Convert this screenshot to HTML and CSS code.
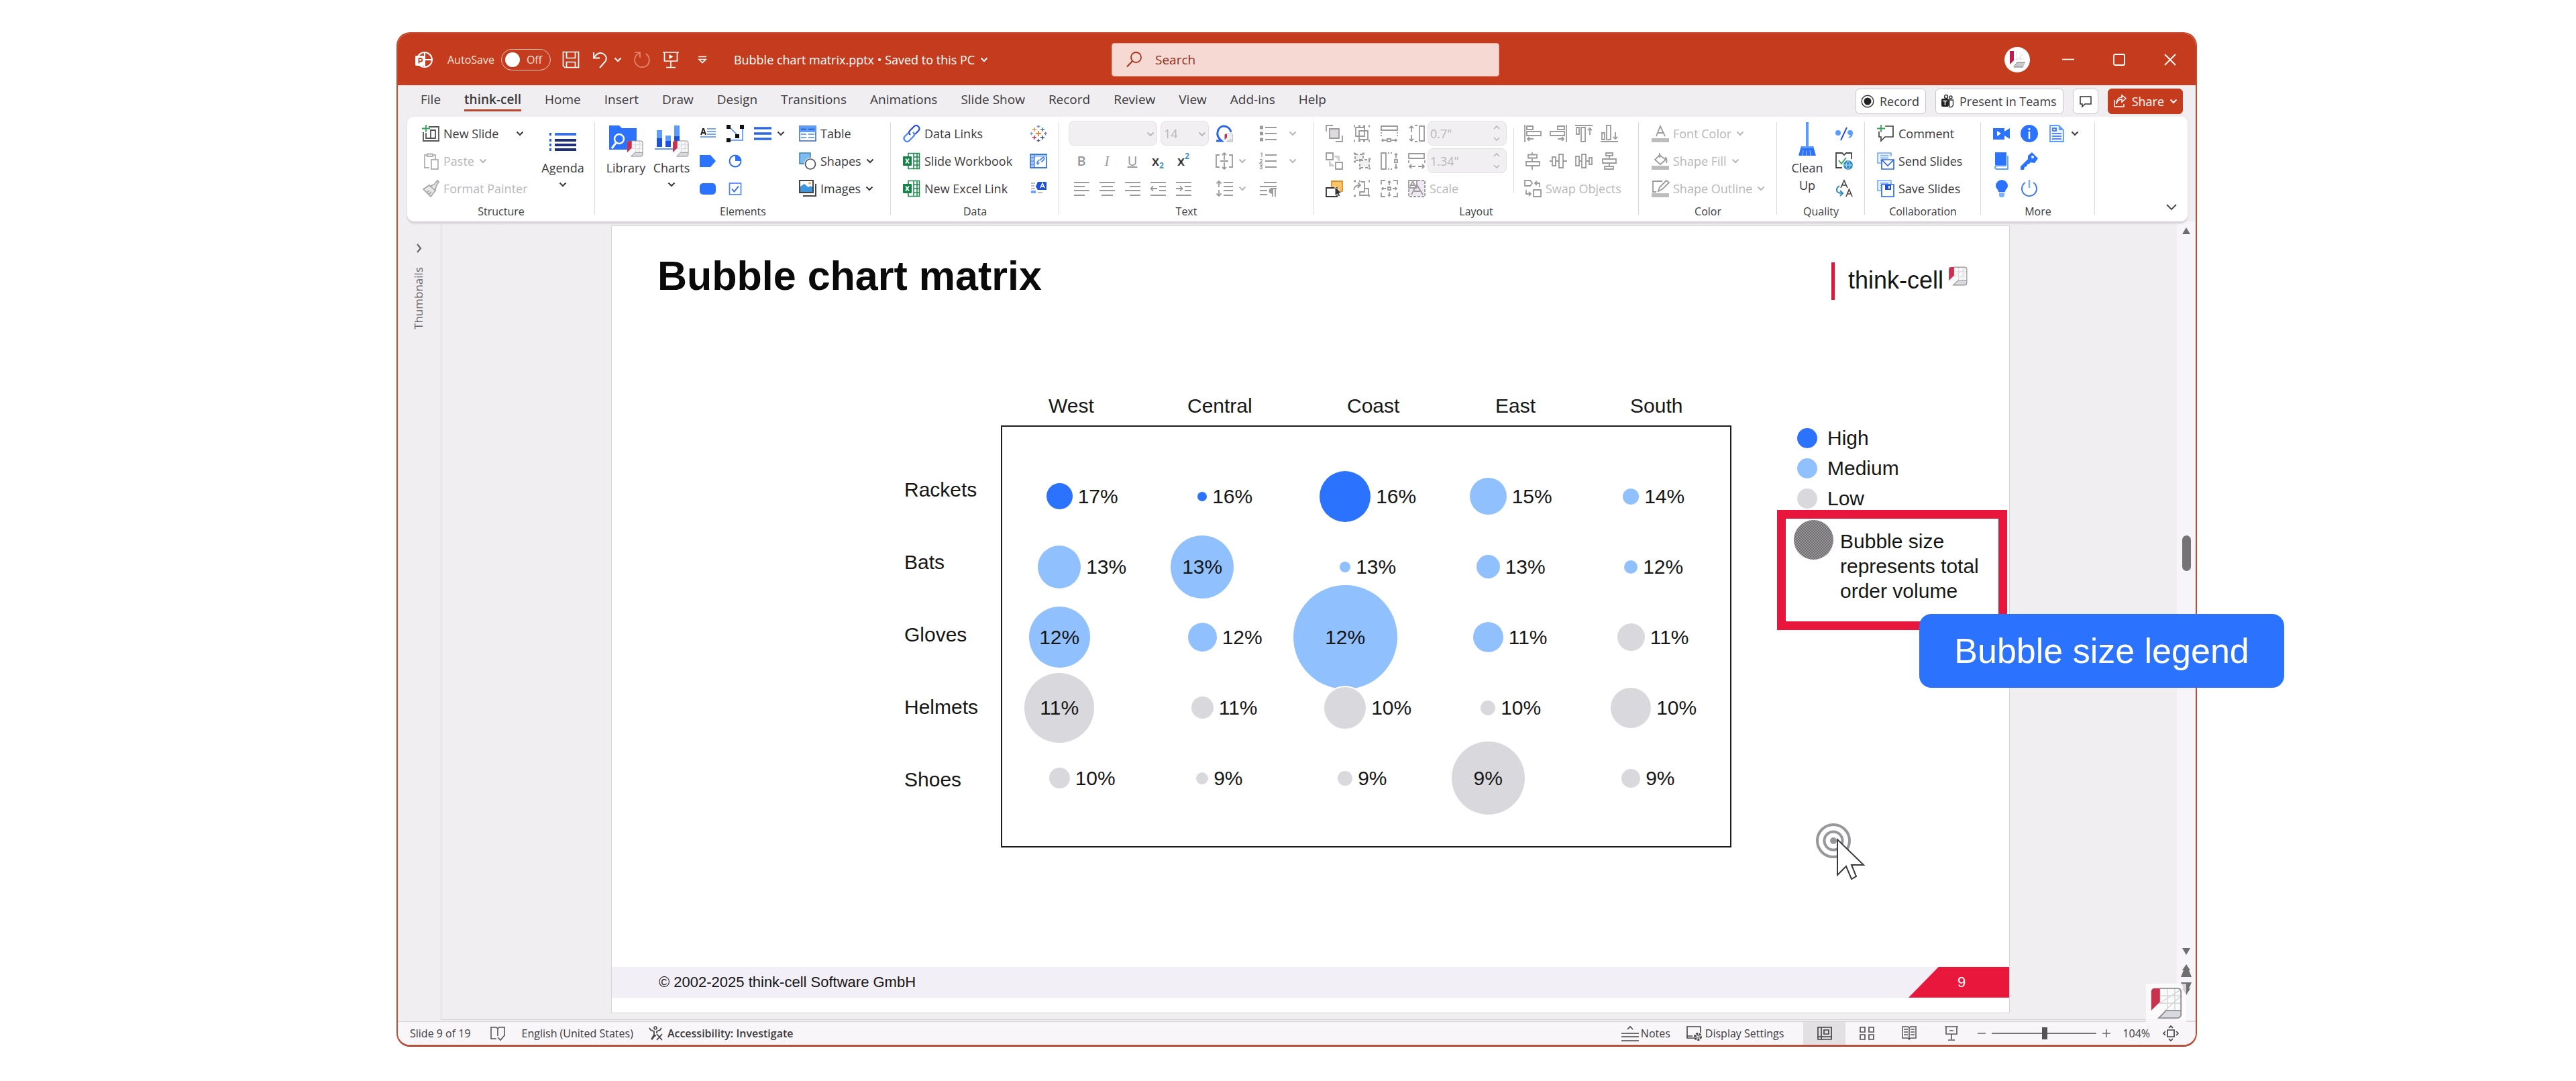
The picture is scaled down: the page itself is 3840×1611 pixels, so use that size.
FILE: index.html
```html
<!DOCTYPE html>
<html lang="en">
<head>
<meta charset="utf-8">
<title>Bubble chart matrix.pptx</title>
<link rel="stylesheet" href="styles.css">
</head>
<body>
<svg class="sprite" aria-hidden="true">
  <symbol id="chev" viewBox="0 0 12 12"><path d="M1.500 3.500L6 8l4.500-4.500" fill="none" stroke="currentColor" stroke-width="2"/></symbol>
  <symbol id="tc" viewBox="0 0 52 52"><path d="M8 2H50V44Q50 50 44 50H12L2 38V8Q2 2 8 2Z" fill="#fbfafb"/><path d="M16 2v24M28 2v36M40 2v36M16 14h34M14 26h36M16 26L50 4M24 38L50 14" stroke="#d5d3d6" fill="none" stroke-width="1.5"/><path d="M8 2h8v22L2 38V8q0-6 6-6z" fill="#c9324f"/><path d="M26 38h24v6q0 6-6 6H14z" fill="#d9dae0" stroke="#8e8c90" stroke-width="2"/><path d="M50 38V8q0-6-6-6H16" fill="none" stroke="#8e8c90" stroke-width="2"/></symbol>
  <symbol id="xl" viewBox="0 0 26 26"><path d="M8 1.500h16.500v23H8zM16 1.500v23M21 1.500v23M16 7h8.500M16 13h8.500M16 19h8.500" fill="#fff" stroke="#1f8a4d" stroke-width="1.600"/><rect x="0" y="6" width="13" height="14" rx="1" fill="#16834a"/><path d="M4 9.500l5 7M9 9.500l-5 7" stroke="#fff" stroke-width="1.800"/></symbol>
  <symbol id="slides" viewBox="0 0 26 26"><path d="M6 16H1V1h20v5M5 5h12M5 8.500h12M5 12h3" fill="#eaf2ff" stroke="#6ba4ff" stroke-width="1.600"/></symbol>
</svg>

<main class="window">
  <header class="titlebar">
    <div class="quick">
      <svg class="i26" viewBox="0 0 26 26"><circle cx="14" cy="13" r="11" fill="none" stroke="#fff" stroke-width="2"/><path d="M14 2v11h11M14 13v11" fill="none" stroke="#fff" stroke-width="2"/><rect x="0" y="7" width="14" height="15" rx="2" fill="#fff"/><path d="M5.500 18.500V11h2.500a2.300 2.300 0 0 1 0 4.700H5.500" fill="none" stroke="#c43c1d" stroke-width="1.800"/></svg>
      <label class="autosave">AutoSave <span class="track"><input type="checkbox" role="switch">Off</span></label>
      <button class="qa" aria-label="Save"><svg class="i26" viewBox="0 0 26 26"><path d="M1.500 1.500h23v23H4l-2.500-2.500zM6.500 1.500v9h13v-9M6.500 24.500v-8h13v8" fill="none" stroke="#fff" stroke-width="1.700"/></svg></button>
      <button class="qa split" aria-label="Undo"><svg class="i26" viewBox="0 0 26 26"><path d="M4 2v8.500h9M4.500 10C8 4 13 1.500 18 4c6 3.500 6 9 2 13l-7 8" fill="none" stroke="#fff" stroke-width="1.900"/></svg><svg class="i12"><use href="#chev"/></svg></button>
      <button class="qa" aria-label="Redo"><svg class="i26" viewBox="0 0 26 26"><path d="M2 2h8v8M9.500 3C2 6 0 14 4.500 20c5 6 14 5.500 18-1 3-6 1-12-4-15" fill="none" stroke="#e4886f" stroke-width="1.700"/></svg></button>
      <button class="qa" aria-label="Start slide show"><svg class="i26" viewBox="0 0 26 26"><path d="M1 2h24M3.500 2v13h19V2M13 15v9.500M6 24.500h14" fill="none" stroke="#fff" stroke-width="1.700"/><path d="M10.500 5v7l6-3.500z" fill="#fff"/></svg></button>
      <button class="qa more" aria-label="Customize toolbar"><svg class="i12" viewBox="0 0 12 12"><path d="M0 1.500h12M1 5.500l5 5 5-5z" fill="none" stroke="#fff" stroke-width="1.700"/></svg></button>
      <button class="doc">Bubble chart matrix.pptx • Saved to this PC <svg class="i12"><use href="#chev"/></svg></button>
    </div>
    <label class="search"><svg class="i26" viewBox="0 0 26 26"><circle cx="15.500" cy="9.500" r="7.500" fill="none" stroke="#a8341a" stroke-width="1.800"/><path d="M10 15L2 23.500" stroke="#a8341a" stroke-width="2"/></svg><input type="search" placeholder="Search" aria-label="Search"></label>
    <div class="caption">
      <span class="avatar"><svg class="i26" viewBox="0 0 26 26"><path d="M2 0h6v14l-6 6z" fill="#c2194f"/><path d="M13 17h12l-3 7H8z" fill="#c9c9ce"/><path d="M8 23.500l5-6.500h12M8 24h14" stroke="#77757a" fill="none"/><path d="M12 1v12M18 3v11M9 12h15M12 13L22 5" stroke="#dddbe0" fill="none"/></svg></span>
      <button aria-label="Minimize"><svg class="i18" viewBox="0 0 18 18"><path d="M0 8.500h18" stroke="#fff" stroke-width="1.700"/></svg></button>
      <button aria-label="Maximize"><svg class="i18" viewBox="0 0 18 18"><rect x="1" y="1" width="16" height="16" rx="2" fill="none" stroke="#fff" stroke-width="1.800"/></svg></button>
      <button aria-label="Close"><svg class="i18" viewBox="0 0 18 18"><path d="M1 1l16 16M17 1L1 17" stroke="#fff" stroke-width="1.800"/></svg></button>
    </div>
  </header>

  <nav class="tabs">
    <a href="#file">File</a><a href="#think-cell" class="on">think-cell</a><a href="#home">Home</a><a href="#insert">Insert</a><a href="#draw">Draw</a><a href="#design">Design</a><a href="#transitions">Transitions</a><a href="#animations">Animations</a><a href="#slideshow">Slide Show</a><a href="#record">Record</a><a href="#review">Review</a><a href="#view">View</a><a href="#addins">Add-ins</a><a href="#help">Help</a>
    <div class="actions">
      <button class="pill"><svg class="i20" viewBox="0 0 20 20"><circle cx="10" cy="10" r="8.800" fill="none" stroke="#333" stroke-width="1.400"/><circle cx="10" cy="10" r="5.500" fill="#222"/></svg>Record</button>
      <button class="pill"><svg class="i20" viewBox="0 0 20 20"><circle cx="8" cy="3" r="2.500" fill="none" stroke="#333" stroke-width="1.400"/><circle cx="15" cy="4" r="2" fill="none" stroke="#333" stroke-width="1.400"/><path d="M13 8h5.500v7c0 3-3 4-6 3.500M13 6v12" fill="none" stroke="#333" stroke-width="1.400"/><rect x="1" y="6" width="11" height="12" rx="2" fill="#222"/><path d="M3.500 9.500h6M6.500 9.500v6" stroke="#fff" stroke-width="1.500"/></svg>Present in Teams</button>
      <button class="pill note" aria-label="Comments"><svg class="i20" viewBox="0 0 20 20"><path d="M2 3h16v11h-9l-4 4v-4H2z" fill="none" stroke="#333" stroke-width="1.500"/></svg></button>
      <button class="pill share"><svg class="i20" viewBox="0 0 20 20"><path d="M2 8v10h14v-4M5 14c1-5 4-7 8-7v4l6-5.500L13 1v3C8 4 5 8 5 14z" fill="none" stroke="#fff" stroke-width="1.500"/></svg>Share<svg class="i12"><use href="#chev"/></svg></button>
    </div>
  </nav>

  <section class="ribbon">
    <div class="group g-structure">
      <div class="tools">
        <div class="col">
          <button class="tool wide"><svg class="i26" viewBox="0 0 26 26"><path d="M10 3h15v21H2V11M6 12v8h14V8h-8M13 8v12" fill="none" stroke="#555" stroke-width="1.800"/><path d="M6 0v11M0 5.500h12" stroke="#3ba35a" stroke-width="1.800"/></svg>New Slide<svg class="i12"><use href="#chev"/></svg></button>
          <button class="tool" disabled><svg class="i26" viewBox="0 0 26 26"><path d="M11 23H4V4h4M16 4h4v6M8 2.500h8V6H8zM14 11h10v14H14z" fill="none" stroke="#b3b1b4" stroke-width="1.800"/></svg>Paste<svg class="i12"><use href="#chev"/></svg></button>
          <button class="tool" disabled><svg class="i26" viewBox="0 0 26 26"><path d="M2 14l9-6 9 8-7 9zM7 19l4-3M10 22l4-4M13 9l5-2 5-6 2 2-4 7-1 5" fill="#e9e7ea" stroke="#a9a7aa" stroke-width="1.800"/></svg>Format Painter</button>
        </div>
        <button class="big"><svg class="bigicon" viewBox="0 0 50 50"><path d="M5 15h3M5 24h3M5 31h3M5 38h3" stroke="#2b5fd8" stroke-width="4"/><path d="M13 15h32" stroke="#3a6fe8" stroke-width="4"/><path d="M13 24h32M13 31h32M13 38h32" stroke="#1f2f7c" stroke-width="4"/></svg>Agenda<svg class="i12"><use href="#chev"/></svg></button>
      </div>
      <h2>Structure</h2>
    </div>

    <div class="group g-elements">
      <div class="tools">
        <button class="big"><svg class="bigicon" viewBox="0 0 50 50"><path d="M0 2h15l4 4h22v32H0z" fill="#2b72ff"/><circle cx="15" cy="22" r="7" fill="none" stroke="#fff" stroke-width="2.500"/><path d="M11 27l-7 9" stroke="#fff" stroke-width="3"/><svg x="26" y="24" width="25" height="25"><use href="#tc"/></svg></svg>Library</button>
        <button class="big"><svg class="bigicon" viewBox="0 0 50 50"><path d="M3 9h8v12H3zM16 17h8v10h-8zM29 2h8v16h-8z" fill="#5c9bff"/><path d="M3 21h8v13H3zM16 25h8v9h-8zM29 18h8v16h-8z" fill="#1d4fe0"/><path d="M0 37h28" stroke="#5c9bff" stroke-width="2"/><svg x="26" y="24" width="25" height="25"><use href="#tc"/></svg></svg>Charts<svg class="i12"><use href="#chev"/></svg></button>
        <div class="icons three">
          <button aria-label="Text box"><svg class="i26" viewBox="0 0 26 26"><path d="M3 15l3-9h1l3 9M4 12h5" fill="none" stroke="#222" stroke-width="2"/><path d="M12 6h13M12 10h13M12 14h13M2 18h23" stroke="#4a86f5" stroke-width="1.600"/></svg></button>
          <button aria-label="Connector"><svg class="i26" viewBox="0 0 26 26"><path d="M4 3l14 14M24 3v20H3" fill="none" stroke="#4a86f5" stroke-width="1.500"/><path d="M0 0h6v6H0zM20 0h6v6h-6zM13 14h6v6h-6zM0 20h6v6H0z" fill="#111"/></svg></button>
          <button class="split" aria-label="Lines"><svg class="i26" viewBox="0 0 26 26"><path d="M0 5h26M0 13h26M0 21h26" stroke="#2b65e8" stroke-width="3.500"/></svg><svg class="i12"><use href="#chev"/></svg></button>
          <button aria-label="Pentagon"><svg class="i26" viewBox="0 0 26 26"><path d="M1 4h16l8 9-8 9H1z" fill="#2b72ff"/></svg></button>
          <button aria-label="Harvey ball"><svg class="i26" viewBox="0 0 26 26"><circle cx="13" cy="13" r="8.500" fill="#fff" stroke="#2b65e8" stroke-width="1.800"/><path d="M13 4.500a8.500 8.500 0 0 1 8.500 8.500H13z" fill="#2b72ff"/></svg></button>
          <i></i>
          <button aria-label="Rounded rectangle"><svg class="i26" viewBox="0 0 26 26"><rect x="1" y="5" width="24" height="17" rx="5" fill="#2b72ff"/></svg></button>
          <button aria-label="Checkbox"><svg class="i26" viewBox="0 0 26 26"><rect x="4.500" y="5" width="17" height="17" fill="#fff" stroke="#4a86f5" stroke-width="1.700"/><path d="M8 13.500l3.500 4 6.500-8" fill="none" stroke="#2b65e8" stroke-width="1.800"/></svg></button>
        </div>
        <div class="col">
          <button class="tool"><svg class="i26" viewBox="0 0 26 26"><rect x="1" y="2" width="24" height="22" fill="#fff" stroke="#3a6fd8" stroke-width="1.600"/><path d="M1 2h24v9H1z" fill="#5c9bff"/><path d="M3 6.500h8M14 6.500h9" stroke="#1d4fb0" stroke-width="1.600"/><path d="M3 14h8M14 14h9M3 19h8M14 19h9" stroke="#4a86f5" stroke-width="1.600"/></svg>Table</button>
          <button class="tool"><svg class="i26" viewBox="0 0 26 26"><path d="M1 1h16v16H1z" fill="#7dbcf0" stroke="#3f7fb5" stroke-width="1.500"/><circle cx="17" cy="17" r="9" fill="#fff"/><circle cx="17" cy="17.500" r="7.500" fill="#fff" stroke="#555" stroke-width="1.700"/></svg>Shapes<svg class="i12"><use href="#chev"/></svg></button>
          <button class="tool"><svg class="i26" viewBox="0 0 26 26"><path d="M25 6v18H6" fill="none" stroke="#444" stroke-width="2"/><path d="M1 1h20v18H1z" fill="#fff" stroke="#444" stroke-width="2"/><path d="M2 10l6-4 6 5 3-2 3 2v7H2z" fill="#3f95e0"/><circle cx="16" cy="5" r="1.800" fill="#f0a050"/></svg>Images<svg class="i12"><use href="#chev"/></svg></button>
        </div>
      </div>
      <h2>Elements</h2>
    </div>

    <div class="group g-data">
      <div class="tools">
        <div class="col">
          <button class="tool"><svg class="i26" viewBox="0 0 26 26" fill="none" stroke-width="2.300"><path d="M11 15l-1-1c-1.500-2-1-4 .5-5.500l6-6c2-2 4.500-2 6.500 0s2 4.500 0 6.500l-5 5" stroke="#2b50d8"/><path d="M15 11l1 1c1.500 2 1 4-.5 5.500l-6 6c-2 2-4.500 2-6.500 0s-2-4.500 0-6.500l5-5" stroke="#4a86f5"/></svg>Data Links</button>
          <button class="tool"><svg class="i26"><use href="#xl"/></svg>Slide Workbook</button>
          <button class="tool"><svg class="i26"><use href="#xl"/></svg>New Excel Link</button>
        </div>
        <div class="icons one">
          <button aria-label="Tableau"><svg class="i26" viewBox="0 0 26 26" stroke-width="1.400"><path d="M13 9v8M9 13h8" stroke="#e8833a" stroke-width="1.800"/><path d="M13 0v5M10.500 2.500h5" stroke="#7f9fc0"/><path d="M13 21v5M10.500 23.500h5" stroke="#5b5f98"/><path d="M7 4v6M4 7h6" stroke="#e8935a"/><path d="M19 4v6M16 7h6" stroke="#4f7596"/><path d="M7 16v6M4 19h6" stroke="#b5304f"/><path d="M19 16v6M16 19h6" stroke="#2f4d86"/><path d="M2.500 10.500v5M0 13h5" stroke="#7f9fc0"/><path d="M23.500 10.500v5M21 13h5" stroke="#7b7fb0"/></svg></button>
          <button aria-label="Table link"><svg class="i26" viewBox="0 0 26 26"><path d="M1 3h24v20H1z" fill="#fff" stroke="#3a78d8" stroke-width="1.800"/><path d="M2 4h5v18H2zM2 4h23v3H2z" fill="#a9c8ff"/><path d="M7 3v20M2 8h5M2 13h5M2 18h5" stroke="#3a78d8" stroke-width="1.200"/><path d="M14 15l-1 2c-1 1-3 0-2-2l3-4M15 12l4-4c2-1 3.500 1 2.500 2.500l-4 4" fill="none" stroke="#4a86f5" stroke-width="1.800"/></svg></button>
          <button aria-label="Tagged text"><svg class="i26" viewBox="0 0 26 26"><path d="M2 5h6M2 9h5M2 13h6M12 19h7" stroke="#aaa8ac" stroke-width="1.600"/><path d="M2 16h7v4H2z" fill="#6ba4ff"/><path d="M12 3h13v12H12l-3-5z" fill="#1d4fe0"/><path d="M16 12l3-7 3 7M17 10h4" fill="none" stroke="#fff" stroke-width="1.500"/></svg></button>
        </div>
      </div>
      <h2>Data</h2>
    </div>

    <div class="group g-text">
      <div class="tools">
        <div class="col font">
          <div class="row">
            <span class="combo c1"><select disabled aria-label="Font"><option></option></select><svg class="i12"><use href="#chev"/></svg></span>
            <span class="combo c2"><select disabled aria-label="Font size"><option>14</option></select><svg class="i12"><use href="#chev"/></svg></span>
          </div>
          <div class="row five">
            <button class="dim"><b>B</b></button><button class="dim"><em>I</em></button><button class="dim"><u>U</u></button><button class="x"><b>x</b><sub>2</sub></button><button class="x"><b>x</b><sup>2</sup></button>
          </div>
          <div class="row five">
            <button aria-label="Align left"><svg class="i26 g" viewBox="0 0 26 26"><path d="M2 4h23M2 10h16M2 16h23M2 23h16"/></svg></button>
            <button aria-label="Center"><svg class="i26 g" viewBox="0 0 26 26"><path d="M2 4h23M5 10h17M2 16h23M5 23h17"/></svg></button>
            <button aria-label="Align right"><svg class="i26 g" viewBox="0 0 26 26"><path d="M2 4h23M9 10h16M2 16h23M9 23h16"/></svg></button>
            <button aria-label="Decrease indent"><svg class="i26 g" viewBox="0 0 26 26"><path d="M2 4h23M15 10h10M15 16h10M2 23h23M12 13H3M6 9.500L2.500 13 6 16.500"/></svg></button>
            <button aria-label="Increase indent"><svg class="i26 g" viewBox="0 0 26 26"><path d="M2 4h23M15 10h10M15 16h10M2 23h23M2 13h9M8 9.500l3.500 3.500L8 16.500"/></svg></button>
          </div>
        </div>
        <div class="col mid">
          <button aria-label="Symbol"><svg class="i26" viewBox="0 0 26 26"><path d="M1 24h8c-5-4-7-8-6-13C4 5 8 2 12 2c6 0 10 4 11 9" fill="none" stroke="#2b65e8" stroke-width="3"/><svg x="13" y="13" width="13" height="13"><use href="#tc"/></svg></svg></button>
          <button class="split" disabled aria-label="Align text"><svg class="i26 g" viewBox="0 0 26 26"><path d="M6 4H1v18h5M20 4h5v18h-5M7 13h12M13 11V1M10 4l3-3 3 3M13 15v10M10 22l3 3 3-3"/></svg><svg class="i12"><use href="#chev"/></svg></button>
          <button class="split" disabled aria-label="Line spacing"><svg class="i26 g" viewBox="0 0 26 26"><path d="M12 4h14M12 10h14M12 16h14M12 23h14M5 2v9M1.500 5.500L5 2l3.500 3.500M5 15v9M1.500 20.500L5 24l3.500-3.500"/></svg><svg class="i12"><use href="#chev"/></svg></button>
        </div>
        <div class="col lists">
          <button class="split" disabled aria-label="Bullets"><svg class="i26 g" viewBox="0 0 26 26"><path d="M9 4h17M9 13h17M9 22h17"/><path d="M1 4h5M1 13h5M1 22h5" stroke-width="5"/></svg><svg class="i12"><use href="#chev"/></svg></button>
          <button class="split" disabled aria-label="Numbering"><svg class="i26 g" viewBox="0 0 26 26"><path d="M9 4h17M9 13h17M9 22h17"/><path d="M2 2l2-1v6M1 11c3-2 4 0 3 2l-3 3h4M1 19h3.500l-2 2.500c3 0 3 4-1.500 3" stroke-width="1.300"/></svg><svg class="i12"><use href="#chev"/></svg></button>
          <button disabled aria-label="Text direction"><svg class="i26 g" viewBox="0 0 26 26"><path d="M7 4h19M1 10h25M1 16h11M1 22h11M20 13v12M24 13v12M26 13h-7"/><path d="M20 13c-6 0-6 7 0 7z" fill="#a09ea1"/></svg></button>
        </div>
      </div>
      <h2>Text</h2>
    </div>

    <div class="group g-layout">
      <div class="tools">
        <div class="icons three">
          <button aria-label="Bring to front"><svg class="i26 g" viewBox="0 0 26 26"><path d="M1 10V1h10M25 16v9H15"/><path d="M6 6h14v14H6z" fill="#dddbde"/></svg></button>
          <button aria-label="Group"><svg class="i26 g" viewBox="0 0 26 26"><path d="M4 4h13v13H4zM9 9h13v13H9z"/><path d="M1 2h2M23 2h2M1 24h2M23 24h2M8 2h3M15 2h3M8 24h3M15 24h3" stroke-width="3"/></svg></button>
          <button aria-label="Same height"><svg class="i26 g" viewBox="0 0 26 26"><path d="M1 2h24v6H1z"/><path d="M1 11v8M25 11v8" stroke-dasharray="2 2"/><path d="M10 21h5v4h-5zM9 23H2M16 23h8M4 21l-2 2 2 2M22 21l2 2-2 2"/></svg></button>
          <button aria-label="Send to back"><svg class="i26 g" viewBox="0 0 26 26"><path d="M13 6h7v7M6 13v7h7" fill="#dddbde" stroke="#c9c7ca"/><path d="M1 1h10v10H1zM15 15h10v10H15z" fill="#fff"/></svg></button>
          <button aria-label="Ungroup"><svg class="i26 g" viewBox="0 0 26 26"><path d="M3 3h12v9H3zM10 11h14v12H10z" stroke-dasharray="4 3" fill="#f2f0f3"/><path d="M1 2h3M14 2h3M1 14h3M9 24h3M23 24h3M23 10h3" stroke-width="3"/></svg></button>
          <button aria-label="Same width"><svg class="i26 g" viewBox="0 0 26 26"><path d="M1 1h7v24H1z"/><path d="M11 1h8M11 25h8" stroke-dasharray="2 2"/><path d="M21 11h4v4h-4zM23 9V2M23 17v7M21 4l2-2 2 2M21 22l2 2 2-2"/></svg></button>
          <button aria-label="Select objects"><svg class="i26" viewBox="0 0 26 26"><path d="M9 2h16v15H9z" fill="#fdc46a" stroke="#e0912c" stroke-width="1.800"/><path d="M1 12h16v13H1z" fill="#fff" stroke="#333" stroke-width="1.800"/><path d="M14 10v14l3.500-3 2 4 2.500-1-2-4h4z" fill="#333" stroke="#fff"/></svg></button>
          <button aria-label="Regroup"><svg class="i26 g" viewBox="0 0 26 26"><path d="M1 15c1-5 4-7 9-7M7 4l4 4-4 4M12 3h5v10h6v10H10v-5h7V13"/><path d="M1 2h3M23 2h2M1 24h3M23 24h2M9 2h2" stroke-width="3"/></svg></button>
          <button aria-label="Fit"><svg class="i26 g" viewBox="0 0 26 26"><path d="M1 7V1h6M19 1h6v6M25 19v6h-6M7 25H1v-6M11 11h4v4h-4zM13 8V2M13 18v6M8 13H2M18 13h6M11 4l2-2 2 2M11 22l2 2 2-2M4 11l-2 2 2 2M22 11l2 2-2 2"/></svg></button>
        </div>
        <div class="col size">
          <div class="row"><svg class="i26 g" viewBox="0 0 26 26"><path d="M17 2h7v22h-7zM5 11V2M2 5l3-3 3 3M5 15v9M2 21l3 3 3-3M10 1h4M10 25h4"/></svg><span class="spin"><input disabled value='0.7"' aria-label="Height"><svg class="updown" viewBox="0 0 12 28"><path d="M2 8l4-4 4 4M2 21l4 4 4-4" fill="none" stroke="#b9b7ba" stroke-width="1.600"/></svg></span></div>
          <div class="row"><svg class="i26 g" viewBox="0 0 26 26"><path d="M1 2h23v7H1zM11 21H2M5 18l-3 3 3 3M15 21h9M21 18l3 3-3 3M1 12v4M25 12v4"/></svg><span class="spin"><input disabled value='1.34"' aria-label="Width"><svg class="updown" viewBox="0 0 12 28"><path d="M2 8l4-4 4 4M2 21l4 4 4-4" fill="none" stroke="#b9b7ba" stroke-width="1.600"/></svg></span></div>
          <button class="tool" disabled><svg class="i26 g" viewBox="0 0 26 26"><path d="M14 1h11v24H1V14" stroke-dasharray="4 2" fill="#f0e8f3"/><path d="M1 1h12v11H1z" fill="#fff"/><path d="M3 10l4-8 4 8M4 8h5M5 22l8-15 9 15M9 17h9"/></svg>Scale</button>
        </div>
        <span class="rule"></span>
        <div class="col">
          <div class="row four">
            <button aria-label="Align objects left"><svg class="i26 g" viewBox="0 0 26 26"><path d="M1 0v26M4 2h9v5H4zM4 10h21v6H4zM14 21H5M8 18l-3 3 3 3"/></svg></button>
            <button aria-label="Align objects right"><svg class="i26 g" viewBox="0 0 26 26"><path d="M25 0v26M12 2h10v5H12zM1 10h21v6H1zM12 21h9M18 18l3 3-3 3"/></svg></button>
            <button aria-label="Align objects top"><svg class="i26 g" viewBox="0 0 26 26"><path d="M0 1h26M2 4h4v10H2zM9 4h6v21H9zM22 15V5M19 8l3-3 3 3"/></svg></button>
            <button aria-label="Align objects bottom"><svg class="i26 g" viewBox="0 0 26 26"><path d="M0 25h26M2 12h4v10H2zM9 1h6v21H9zM22 11v10M19 18l3 3 3-3"/></svg></button>
          </div>
          <div class="row four">
            <button aria-label="Center horizontally"><svg class="i26 g" viewBox="0 0 26 26"><path d="M12 0v3M12 9v5M12 20v6M6 3.500h13v5H6zM3 14h20v6H3z"/></svg></button>
            <button aria-label="Center vertically"><svg class="i26 g" viewBox="0 0 26 26"><path d="M0 13h4M9 13h5M20 13h6M4 7h5v13H4zM14 3h6v20h-6z"/></svg></button>
            <button aria-label="Distribute horizontally"><svg class="i26 g" viewBox="0 0 26 26"><path d="M1 6h5v14H1zM10 3h6v20h-6zM21 8h4v10h-4zM6 13h4M16 13h5"/></svg></button>
            <button aria-label="Distribute vertically"><svg class="i26 g" viewBox="0 0 26 26"><path d="M8 1h10v4H8zM3 10h20v6H3zM6 21h13v4H6zM13 5v5M13 16v5"/></svg></button>
          </div>
          <button class="tool" disabled><svg class="i26 g" viewBox="0 0 26 26"><path d="M1 1h8l3 4-3 4H1zM14 15h11v10H14zM16 5h7v6M19 2l-3 3 3 3M10 21H3v-6M7 18l3 3-3 3"/></svg>Swap Objects</button>
        </div>
      </div>
      <h2>Layout</h2>
    </div>

    <div class="group g-color">
      <div class="tools">
        <div class="col">
          <button class="tool" disabled><svg class="i26 g" viewBox="0 0 26 26"><path d="M7 17l6-15 7 15M9 12h9"/><path d="M0 23h26" stroke="#bdbbbe" stroke-width="6"/></svg>Font Color<svg class="i12"><use href="#chev"/></svg></button>
          <button class="tool" disabled><svg class="i26 g" viewBox="0 0 26 26"><path d="M12 4l9 7-8 7-8-7zM12 8V1M20 8c3 0 3 4 2 8"/><path d="M0 23h26" stroke="#bdbbbe" stroke-width="6"/></svg>Shape Fill<svg class="i12"><use href="#chev"/></svg></button>
          <button class="tool" disabled><svg class="i26 g" viewBox="0 0 26 26"><path d="M16 2H2v16h5M10 17l2-6L22 1l4 3-10 10z"/><path d="M0 23h26" stroke="#bdbbbe" stroke-width="6"/></svg>Shape Outline<svg class="i12"><use href="#chev"/></svg></button>
        </div>
      </div>
      <h2>Color</h2>
    </div>

    <div class="group g-quality">
      <div class="tools">
        <button class="big"><svg class="bigicon" viewBox="0 0 50 50"><path d="M23 -3h4v38h-4z" fill="#5c9bff"/><path d="M16 33h18l4 14H12z" fill="#2b72ff"/><path d="M17 33h16v3H16z" fill="#5c9bff"/><path d="M18 48l1-9M24 48v-8M30 48l-1-9" stroke="#a9c8ff"/></svg><span>Clean<br>Up</span></button>
        <div class="icons one">
          <button aria-label="Decimal style"><svg class="i26" viewBox="0 0 26 26"><circle cx="4" cy="12" r="4" fill="#5c9bff"/><path d="M17 4L8 23" stroke="#2b50d8" stroke-width="2"/><path d="M22 8a4 4 0 0 1 4 4c0 4-2 7-6 8l-.500-1.500c2-1 3-2 3-3.500a3.600 3.600 0 1 1-.5-7z" fill="#5c9bff"/></svg></button>
          <button aria-label="Proofing language"><svg class="i26" viewBox="0 0 26 26"><path d="M24 10V1h-8l-3 3-3-3H1v22h9" fill="none" stroke="#444" stroke-width="1.800"/><path d="M5 12l4 5 7-9" fill="none" stroke="#3ba35a" stroke-width="1.900"/><circle cx="19" cy="19" r="7" fill="#2a8ac6"/><path d="M12.500 19h13M19 12.500c-4 4-4 9 0 13M19 12.500c4 4 4 9 0 13" stroke="#d4ebf8" fill="none"/></svg></button>
          <button aria-label="Replace fonts"><svg class="i26" viewBox="0 0 26 26"><path d="M8 12l5-11 5 11M10 8h6M16 25l4.500-11L25 25M18 21h6" fill="none" stroke="#444" stroke-width="1.600"/><path d="M6 9c-6 4-6 11 4 11M7 16l4 4-4 4" fill="none" stroke="#2a8ac6" stroke-width="2"/></svg></button>
        </div>
      </div>
      <h2>Quality</h2>
    </div>

    <div class="group g-collab">
      <div class="tools">
        <div class="col">
          <button class="tool"><svg class="i26" viewBox="0 0 26 26"><path d="M12 2h12v16H12l-6 6v-6H3v-8" fill="none" stroke="#444" stroke-width="1.700"/><path d="M6 0v11M0 5.500h12" stroke="#3ba35a" stroke-width="1.800"/></svg>Comment</button>
          <button class="tool"><svg class="i26" viewBox="0 0 26 26"><use href="#slides" width="26" height="26"/><path d="M7 11h18v14H7zM7 11l9 9 9-9" fill="#fff" stroke="#2b65e8" stroke-width="1.700"/></svg>Send Slides</button>
          <button class="tool"><svg class="i26" viewBox="0 0 26 26"><use href="#slides" width="26" height="26"/><path d="M7 7h18v18H7z" fill="#fff" stroke="#2b65e8" stroke-width="1.700"/><path d="M12 7h9v8h-9z" fill="#1d4fe0"/><path d="M17 9h2v4h-2z" fill="#fff"/></svg>Save Slides</button>
        </div>
      </div>
      <h2>Collaboration</h2>
    </div>

    <div class="group g-more">
      <div class="tools">
        <div class="icons three">
          <button aria-label="Videos"><svg class="i26" viewBox="0 0 26 26"><path d="M0 5h17v5l8-5v16l-8-5v6H0z" fill="#2b72ff"/><path d="M6 9v8l6-4z" fill="#fff"/></svg></button>
          <button aria-label="Info"><svg class="i26" viewBox="0 0 26 26"><circle cx="13" cy="13" r="13" fill="#2b72ff"/><path d="M13 10v11M13 5v3" stroke="#fff" stroke-width="2.500"/></svg></button>
          <button class="split" aria-label="Documents"><svg class="i26" viewBox="0 0 26 26"><path d="M3 1h13l7 7v17H3z" fill="#eaf2ff" stroke="#5c9bff" stroke-width="1.800"/><path d="M16 1l7 7h-7z" fill="#5c9bff"/><path d="M7 5h5v4H7zM6 13h14M6 17h14M6 21h14" fill="none" stroke="#2b65e8" stroke-width="1.700"/></svg><svg class="i12"><use href="#chev"/></svg></button>
          <button aria-label="Manual"><svg class="i26" viewBox="0 0 26 26"><path d="M3 0h17v19H3z" fill="#2b72ff"/><path d="M22 5v20H6c-4 0-4-5 0-5h14" fill="none" stroke="#5c9bff" stroke-width="1.800"/></svg></button>
          <button aria-label="License"><svg class="i26" viewBox="0 0 26 26"><path d="M17 0l9 9-5 7-6-1-2 2-3 1-1 3-3 1-1 4H0v-5L11 10V5z" fill="#2b72ff"/><circle cx="18" cy="7" r="2" fill="#fff"/></svg></button>
          <i></i>
          <button aria-label="Tips"><svg class="i26" viewBox="0 0 26 26"><path d="M13 0a9 9 0 0 1 9 9c0 4-4 5-4 9H8c0-4-4-5-4-9a9 9 0 0 1 9-9z" fill="#2b72ff"/><path d="M9 19h8v5l-2 2h-4l-2-2z" fill="#7fb0ff"/></svg></button>
          <button aria-label="Deactivate"><svg class="i26" viewBox="0 0 26 26"><path d="M7 4a11 11 0 1 0 12 0" fill="none" stroke="#3a78f0" stroke-width="2"/><path d="M13 0v12" stroke="#7fb0ff" stroke-width="2.500"/></svg></button>
        </div>
      </div>
      <h2>More</h2>
    </div>
    <button class="collapse" aria-label="Collapse ribbon"><svg class="i18" viewBox="0 0 18 18"><path d="M2 5l7 7 7-7" fill="none" stroke="#444" stroke-width="1.800"/></svg></button>
  </section>

  <section class="work">
    <aside class="thumbs"><button aria-label="Show thumbnails"><svg class="i12" viewBox="0 0 12 12"><path d="M4 0l5 6-5 6" fill="none" stroke="currentColor" stroke-width="2.200"/></svg></button><span>Thumbnails</span></aside>

    <div class="canvas">
      <article class="slide">
        <header class="head">
          <h1>Bubble chart matrix</h1>
          <div class="logo"><span>think-cell</span><svg class="mark"><use href="#tc"/></svg></div>
        </header>

        <div class="body">
          <div class="chart">
            <div class="cols"><span>West</span><span>Central</span><span>Coast</span><span>East</span><span>South</span></div>
            <div class="rows"><span>Rackets</span><span>Bats</span><span>Gloves</span><span>Helmets</span><span>Shoes</span></div>
            <div class="plot">
              <div class="pt hi" style="--d:39px"><i></i>17%</div>
              <div class="pt hi" style="--d:14px"><i></i>16%</div>
              <div class="pt hi" style="--d:76px"><i></i>16%</div>
              <div class="pt me" style="--d:55px"><i></i>15%</div>
              <div class="pt me" style="--d:24px"><i></i>14%</div>
              <div class="pt me" style="--d:64px"><i></i>13%</div>
              <div class="pt me" style="--d:94px"><i>13%</i></div>
              <div class="pt me" style="--d:16px"><i></i>13%</div>
              <div class="pt me" style="--d:35px"><i></i>13%</div>
              <div class="pt me" style="--d:20px"><i></i>12%</div>
              <div class="pt me" style="--d:91px"><i>12%</i></div>
              <div class="pt me" style="--d:43px"><i></i>12%</div>
              <div class="pt me" style="--d:155px"><i>12%</i></div>
              <div class="pt me" style="--d:45px"><i></i>11%</div>
              <div class="pt lo" style="--d:41px"><i></i>11%</div>
              <div class="pt lo" style="--d:104px"><i>11%</i></div>
              <div class="pt lo" style="--d:33px"><i></i>11%</div>
              <div class="pt lo" style="--d:62px"><i></i>10%</div>
              <div class="pt lo" style="--d:22px"><i></i>10%</div>
              <div class="pt lo" style="--d:60px"><i></i>10%</div>
              <div class="pt lo" style="--d:31px"><i></i>10%</div>
              <div class="pt lo" style="--d:18px"><i></i>9%</div>
              <div class="pt lo" style="--d:22px"><i></i>9%</div>
              <div class="pt lo" style="--d:109px"><i>9%</i></div>
              <div class="pt lo" style="--d:28px"><i></i>9%</div>
            </div>
          </div>
          <div class="legend">
            <ul><li class="hi"><i></i>High</li><li class="me"><i></i>Medium</li><li class="lo"><i></i>Low</li></ul>
            <div class="sizekey"><i></i><p>Bubble size<br>represents total<br>order volume</p><div class="callout">Bubble size legend</div></div>
          </div>
        </div>

        <footer class="foot"><span>© 2002-2025 think-cell Software GmbH</span><span class="num">9</span></footer>

        <svg class="pointer" viewBox="0 0 74 88"><g fill="none" stroke="#97979b" stroke-width="4"><circle cx="26" cy="26" r="24"/><circle cx="26" cy="26" r="13.500"/></g><circle cx="26" cy="26" r="5" fill="#97979b"/><path d="M32 24v53l13-13 8 19 7-4-7-17h18z" fill="#fff" stroke="#3c3a3e" stroke-width="2"/></svg>
      </article>
    </div>

    <div class="scroll">
      <svg class="arrow" viewBox="0 0 14 12"><path d="M7 1l6 10H1z"/></svg>
      <span class="before"></span><span class="thumb"></span><span class="after"></span>
      <svg class="arrow" viewBox="0 0 14 12"><path d="M7 11L1 1h12z"/></svg>
      <svg class="double" viewBox="0 0 16 20"><path d="M8 0l6 9h-2l4 10H0L4 9H2z"/></svg>
      <svg class="double" viewBox="0 0 16 20"><path d="M0 1h16l-4 9h2l-6 10-6-10h2z"/></svg>
    </div>
  </section>

  <svg class="corner"><use href="#tc"/></svg>

  <footer class="status">
    <span>Slide 9 of 19</span>
    <button class="spell" aria-label="Spelling"><svg class="i22" viewBox="0 0 22 22"><path d="M11 4L9 2H1v17h8M11 4l2-2h8v13M11 4v11M11 17l4 4 6-7" fill="none" stroke="#555" stroke-width="1.600"/></svg></button>
    <span>English (United States)</span>
    <button class="access"><svg class="i22" viewBox="0 0 22 22"><circle cx="10" cy="3" r="2" fill="none" stroke="#444" stroke-width="1.600"/><path d="M1 3l2 3 5 2v5L4 20M19 3l-2 3-5 2v3M5 20l4-6 2 1M12 12l8 9M20 12l-8 9" fill="none" stroke="#444" stroke-width="1.800"/></svg>Accessibility: Investigate</button>
    <span class="space"></span>
    <button class="notes"><svg class="i26" viewBox="0 0 26 26"><path d="M0 13h26M0 18h26M0 24h26M9 7l4-4 4 4" fill="none" stroke="#444" stroke-width="1.600"/></svg>Notes</button>
    <button class="display"><svg class="i26" viewBox="0 0 26 26"><path d="M14 20H2V3h20v9M2 17h8" fill="none" stroke="#444" stroke-width="1.600"/><circle cx="18" cy="18" r="4.500" fill="none" stroke="#444" stroke-width="3" stroke-dasharray="3 1.500"/><circle cx="18" cy="18" r="2" fill="none" stroke="#444"/></svg>Display Settings</button>
    <div class="views">
      <button class="on" aria-label="Normal"><svg class="i22" viewBox="0 0 22 22"><path d="M1 2h20v18H1zM6 2v18M1 16h20M10 6h7v6h-7z" fill="none" stroke="#444" stroke-width="1.700"/></svg></button>
      <button aria-label="Slide sorter"><svg class="i22" viewBox="0 0 22 22"><path d="M1 2h7v7H1zM14 2h7v7h-7zM1 13h7v7H1zM14 13h7v7h-7z" fill="none" stroke="#555" stroke-width="1.700"/></svg></button>
      <button aria-label="Reading view"><svg class="i22" viewBox="0 0 22 22"><path d="M11 3L9 1H1v17h8l2 2 2-2h8V1h-8zM11 3v18M3 5h6M3 9h6M3 13h6M13 5h6M13 9h6M13 13h6" fill="none" stroke="#555" stroke-width="1.500"/></svg></button>
      <button aria-label="Slide show"><svg class="i22" viewBox="0 0 22 22"><path d="M1 1h20M3 1v11h16V1M11 12v8M6 21h10M8 7h6" fill="none" stroke="#555" stroke-width="1.600"/></svg></button>
    </div>
    <div class="zoom"><button aria-label="Zoom out"><svg class="i12" viewBox="0 0 12 12"><path d="M0 6h12" stroke="#666" stroke-width="1.500"/></svg></button><input type="range" min="10" max="200" value="106" aria-label="Zoom"><button aria-label="Zoom in"><svg class="i12" viewBox="0 0 12 12"><path d="M0 6h12M6 0v12" stroke="#666" stroke-width="1.500"/></svg></button></div>
    <span class="pct">104%</span>
    <button aria-label="Fit slide"><svg class="i26" viewBox="0 0 26 26"><path d="M8 8h10v10H8zM10 5l3-3 3 3M10 21l3 3 3-3M5 10l-3 3 3 3M21 10l3 3-3 3" fill="none" stroke="#444" stroke-width="1.700"/></svg></button>
  </footer>
</main>
</body>
</html>
```
FILE: styles.css
```css
* { box-sizing: border-box; }
body {
  margin: 0;
  padding: 48px 565px 52px 591px;
  background: #fff;
  color: #3b393c;
  font: 18px "Open Sans", "Noto Sans", sans-serif;
}
h1, h2, p, ul { margin: 0; padding: 0; }
button {
  display: inline-flex;
  align-items: center;
  padding: 0;
  border: 0;
  background: none;
  color: inherit;
  font: inherit;
  white-space: nowrap;
}
svg { display: block; flex: none; overflow: visible; }
.sprite { position: absolute; width: 0; height: 0; }
.i12 { width: 12px; height: 12px; }
.i18 { width: 18px; height: 18px; }
.i20 { width: 20px; height: 20px; }
.i22 { width: 22px; height: 22px; }
.i26 { width: 26px; height: 26px; }
.g { fill: none; stroke: #9c9a9d; stroke-width: 1.8; }

.window {
  position: relative;
  border: 2px solid #c9492c;
  border-bottom: 3px solid #b2503c;
  border-radius: 20px;
  background: #f0eef1;
}

/* Title bar */
.titlebar {
  display: grid;
  grid-template-columns: 1fr 578px 1fr;
  align-items: center;
  height: 77px;
  padding-left: 26px;
  border-radius: 18px 18px 0 0;
  background: #c43c1d;
  color: #fff;
  font-size: 16px;
}
.quick { display: flex; align-items: center; gap: 17px; }
.autosave { display: flex; align-items: center; gap: 10px; margin-left: 5px; color: #fbe3dc; }
.track {
  display: flex;
  align-items: center;
  gap: 10px;
  width: 74px;
  height: 32px;
  padding-left: 5px;
  border: 1px solid #f3c9bd;
  border-radius: 16px;
}
.track input {
  appearance: none;
  width: 22px;
  height: 22px;
  margin: 0;
  border-radius: 50%;
  background: #fff;
}
.split { gap: 8px; }
.more { margin-left: 11px; }
.doc { gap: 8px; margin-left: 24px; font-size: 18px; }
.search {
  display: flex;
  align-items: center;
  gap: 16px;
  height: 50px;
  padding-left: 20px;
  border: 1px solid #e3a696;
  border-radius: 4px;
  background: #f5d9d2;
}
.search input { flex: 1; border: 0; background: none; font: inherit; font-size: 19px; }
.search input::placeholder { color: #8c2f1b; opacity: 1; }
.caption { display: flex; align-items: center; justify-content: flex-end; gap: 58px; padding-right: 29px; }
.avatar { display: grid; place-items: center; width: 38px; height: 38px; margin-right: -10px; border-radius: 50%; background: #fff; }

/* Tabs */
.tabs { display: flex; align-items: center; height: 47px; padding: 0 19px 0 34px; gap: 35px; }
.tabs a { padding: 0 0 2px; border-bottom: 3px solid transparent; color: inherit; font-size: 19px; line-height: 26px; text-decoration: none; }
.tabs .on { border-color: #b8422a; font-weight: 600; }
.actions { display: flex; gap: 14px; margin-left: auto; }
.pill {
  gap: 8px;
  height: 38px;
  padding: 0 9px 0 7px;
  border: 1px solid #c9c7ca;
  border-radius: 6px;
  background: #fff;
}
.note { padding: 0 8px; }
.share { padding: 0 7px; border-color: #c43c1d; background: #c43c1d; color: #fff; }

/* Ribbon */
.ribbon {
  position: relative;
  display: flex;
  height: 156px;
  margin: 0 12px 0 14px;
  border-radius: 10px;
  background: #fff;
  box-shadow: 0 3px 3px #d3d0d5;
}
.group { display: flex; flex: none; flex-direction: column; position: relative; }
.group::after { content: ""; position: absolute; top: 8px; right: 0; bottom: 10px; width: 1px; background: #dbd9dc; }
.group h2 { font-size: 16px; font-weight: 400; line-height: 24px; text-align: center; }
.tools { display: flex; height: 129px; padding-top: 4px; }
.col, .icons { display: grid; grid-auto-rows: 41px; align-content: start; align-items: center; justify-items: start; }
.icons.three { grid-template-columns: repeat(3, 41px); }
.row { display: flex; align-items: center; }
.tool { gap: 6px; }
.tool .i12 { margin-left: 1px; }
.wide .i12 { margin-left: 20px; }
button:disabled { color: #b9b7ba; }
.big { display: flex; flex-direction: column; width: 68px; align-self: start; padding-top: 7px; line-height: 26px; }
.bigicon { width: 50px; height: 50px; margin-bottom: 2px; }
.big .i12 { margin-top: 6px; }

.g-structure { width: 280px; }
.g-structure .tools { padding-left: 22px; }
.g-structure .col { width: 176px; }
.g-elements { width: 441px; }
.g-elements .tools { padding-left: 12px; }
.g-elements .icons { width: 149px; margin-left: 7px; }
.g-data { width: 251px; }
.g-data .tools { padding-left: 18px; }
.g-data .col { width: 189px; }
.g-text { width: 379px; }
.g-text .tools { padding-left: 14px; }
.font { width: 219px; }
.font .row { gap: 5px; }
.font .five { gap: 0; }
.five button { justify-content: center; width: 38px; font-size: 20px; line-height: 26px; }
.five .dim { color: #98969a; }
.five b { font-weight: 600; }
.five em { font-family: "Liberation Serif", serif; }
.five .x { color: #333; }
.five sub, .five sup { color: #3f95d0; font-size: 12px; font-weight: 700; line-height: 12px; }
.five sub { align-self: flex-end; }
.five sup { align-self: flex-start; }
.combo { position: relative; display: block; height: 37px; border: 1px solid #e3e1e4; border-radius: 8px; background: #f1eff2; }
.combo select { appearance: none; width: 100%; height: 100%; padding: 0 4px; border: 0; background: none; color: #b9b7ba; font: inherit; opacity: 1; }
.combo .i12 { position: absolute; top: 13px; right: 3px; color: #b9b7ba; }
.c1 { width: 132px; }
.c2 { width: 72px; }
.mid { width: 65px; }
.lists .split { gap: 18px; }
.g-layout { width: 485px; }
.g-layout .tools { padding-left: 18px; }
.size { width: 147px; }
.size .row { gap: 3px; }
.spin { position: relative; display: block; width: 118px; height: 37px; }
.spin input { width: 100%; height: 100%; padding: 0 3px; border: 1px solid #e3e1e4; border-radius: 8px; background: #f1eff2; color: #b9b7ba; font: inherit; }
.updown { position: absolute; top: 4px; right: 9px; width: 12px; height: 28px; }
.rule { width: 1px; height: 98px; margin: 12px 15px 0 10px; background: #dbd9dc; }
.four { gap: 12px; }
.g-color { width: 206px; }
.g-color .tools { padding-left: 19px; }
.g-quality { width: 131px; }
.g-quality .tools { padding-left: 11px; }
.g-quality .icons { margin-left: 8px; }
.g-collab { width: 173px; }
.g-collab .tools { padding-left: 18px; }
.g-more { width: 170px; }
.g-more .tools { padding-left: 18px; }
.collapse { align-self: flex-end; margin: 0 15px 12px auto; }

/* Workspace */
.work { display: grid; grid-template-columns: 65px 1fr 28px; }
.thumbs { display: flex; flex-direction: column; align-items: center; gap: 22px; padding: 34px 3px 0 0; border-right: 1px solid #d6d4d7; color: #666467; font-size: 17px; }
.thumbs span { writing-mode: vertical-rl; transform: rotate(180deg); }
.canvas { padding: 7px 250px 10px 254px; border-bottom: 1px solid #d6d4d7; }
.slide {
  position: relative;
  display: flex;
  flex-direction: column;
  aspect-ratio: 16 / 9;
  outline: 1px solid #d6d4d7;
  background: #fff;
  color: #161616;
  font: 30px/36px "Liberation Sans", Arial, sans-serif;
}
.head { display: flex; justify-content: space-between; align-items: center; height: 148px; padding: 0 62px 0 68px; }
.head h1 { font-size: 61px; line-height: 70px; color: #0a0a0a; }
.logo { display: flex; gap: 7px; margin-top: 16px; padding: 4px 0 6px 20px; border-left: 5px solid #e2163c; font-size: 36px; line-height: 46px; }
.mark { width: 29px; height: 29px; margin-top: 2px; }
.body { display: flex; gap: 68px; margin-top: 102px; padding: 0 3px 0 436px; }
.chart { display: grid; flex: 1; grid-template-columns: 144px 1fr; grid-template-rows: 47px 629px; }
.cols { grid-column: 2; display: grid; grid-template-columns: 207px 238px 221px 201px 1fr; padding-left: 71px; }
.rows { display: grid; grid-auto-rows: 108px; align-content: start; align-items: center; padding-top: 42px; }
.plot {
  display: grid;
  grid-template-columns: repeat(5, 1fr);
  grid-auto-rows: 105px;
  padding: 51px 20px 0 0;
  border: 2px solid #1c1c1c;
}
.pt { display: flex; align-items: center; gap: 8px; padding-left: calc(40% - var(--d) / 2); }
.pt i {
  display: grid;
  flex: none;
  place-items: center;
  width: var(--d);
  height: var(--d);
  border-radius: 50%;
  font-style: normal;
  box-shadow: 0 0 0 2px #fff;
}
.hi i { background: #2b72ff; }
.me i { background: #91c0ff; }
.lo i { background: #d9d8dd; }
.legend { width: 343px; padding-top: 43px; }
.legend ul { padding-left: 30px; list-style: none; }
.legend li { display: flex; align-items: center; gap: 15px; height: 45px; }
.legend li i { width: 30px; height: 30px; border-radius: 50%; }
.sizekey { position: relative; display: flex; gap: 10px; height: 179px; margin-top: -5px; padding: 2px 0 0 12px; border: 13px solid #e8163c; }
.sizekey > i { flex: none; width: 59px; height: 59px; border-radius: 50%; background: repeating-conic-gradient(#6c6a6d 0 25%, #9c9a9d 0 50%) 0 0 / 4px 4px; }
.sizekey p { padding-top: 13px; line-height: 37px; white-space: nowrap; }
.callout {
  position: absolute;
  z-index: 2;
  left: 199px;
  top: 142px;
  width: 544px;
  border-radius: 18px;
  background: #2b72ff;
  color: #fff;
  font-size: 52px;
  line-height: 110px;
  text-align: center;
}
.foot { display: flex; justify-content: space-between; height: 46px; margin: auto 0 22px; padding-left: 70px; background: #f3eff7; font-size: 22px; line-height: 46px; }
.num { width: 150px; padding-left: 8px; background: #ea173d; clip-path: polygon(45px 0, 100% 0, 100% 100%, 0 100%); color: #fff; text-align: center; }
.pointer { position: absolute; left: 1795px; top: 890px; width: 74px; height: 88px; }

.scroll { display: flex; flex-direction: column; align-items: center; padding: 8px 0 37px; background: #f7f5f9; fill: #6f6d70; }
.arrow { width: 14px; height: 12px; }
.double { width: 16px; height: 20px; margin-top: 6px; }
.arrow + .double { margin-top: 13px; }
.before { flex: 4; }
.after { flex: 5; }
.thumb { width: 13px; height: 53px; border-radius: 7px; background: #757376; }
.corner { position: absolute; right: 14px; bottom: 33px; width: 60px; height: 58px; padding: 5px; background: rgb(255 255 255 / .7); }

/* Status bar */
.status {
  display: flex;
  align-items: center;
  height: 35px;
  margin-top: 2px;
  padding: 0 24px 0 18px;
  border-top: 1px solid #d6d4d7;
  border-radius: 0 0 18px 18px;
  background: #f8f6f9;
  font-size: 16px;
}
.spell { margin: 0 25px 0 29px; }
.access { gap: 6px; margin-left: 23px; font-weight: 600; }
.space { flex: 1; }
.notes { gap: 3px; }
.display { gap: 3px; margin: 0 29px 0 23px; }
.views { display: flex; align-self: stretch; }
.views button { justify-content: center; width: 63px; }
.views .on { background: #e2e0e3; }
.zoom { display: flex; align-items: center; gap: 9px; margin-left: 8px; }
.zoom input { appearance: none; width: 156px; height: 18px; margin: 0; background: linear-gradient(#777578, #777578) center / 100% 2px no-repeat; }
.zoom input::-webkit-slider-thumb { appearance: none; width: 8px; height: 18px; background: #555356; }
.pct { margin: 0 18px; }
```
